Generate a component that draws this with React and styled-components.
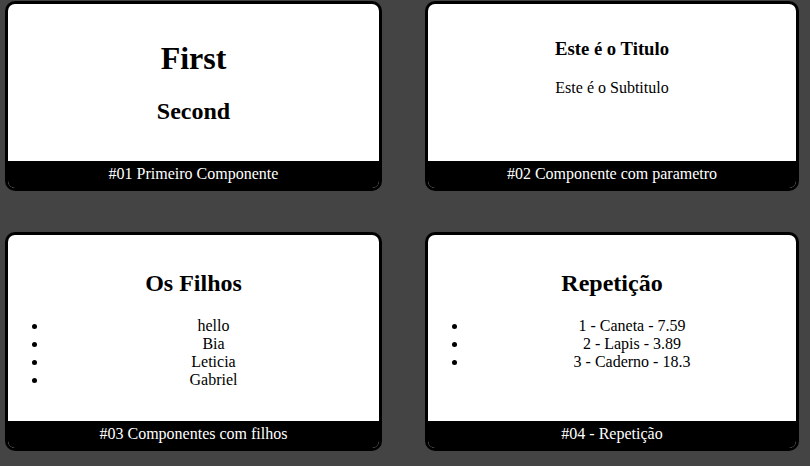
import React from "react"
import styled, { createGlobalStyle } from "styled-components"

const GlobalStyle = createGlobalStyle`
    html, body{
        margin:0;
        padding:0;
        background-color:#444;
        font-family:"Liberation Serif", "Times New Roman", serif;
    }
`

const Page = styled.div`
    display:grid;
    grid-template-columns:377px 374px;
    column-gap:43px;
    row-gap:41px;
    padding:1px 10px 15px 5px;
    min-height:466px;
    box-sizing:border-box;
`

const Card = styled.article`
    display:flex;
    flex-direction:column;
    background-color:white;
    border:3px solid black;
    border-radius:10px;
    overflow:hidden;
`

const CardContent = styled.div`
    flex-grow:1;
    padding:15px 0 14px;
    text-align:center;
    color:#000;

    h1, h2, h3, p, ul{
        margin-left:0;
        margin-right:0;
    }
    h1{
        font-size:32px;
        margin-top:21px;
        margin-bottom:21px;
    }
    h2{
        font-size:24px;
        margin-top:20px;
        margin-bottom:20px;
    }
    h3{
        font-size:18.72px;
        margin-top:19px;
        margin-bottom:19px;
    }
    p{
        font-size:16px;
        margin:16px 0;
    }
    ul{
        padding-left:40px;
        margin:16px 0;
        font-size:16px;
    }
`

const Footer = styled.footer`
    background-color:black;
    color:white;
    text-align:center;
    font-size:16px;
    padding:4px 0 5px;
`

function Box({ title, children }) {
    return (
        <Card>
            <CardContent>{children}</CardContent>
            <Footer>{title}</Footer>
        </Card>
    )
}

const filhos = ["hello", "Bia", "Leticia", "Gabriel"]
const produtos = [
    { id: 1, nome: "Caneta", preco: 7.59 },
    { id: 2, nome: "Lapis", preco: 3.89 },
    { id: 3, nome: "Caderno", preco: 18.3 },
]

export default function App() {
    return (
        <>
            <GlobalStyle />
            <Page>
                <Box title="#01 Primeiro Componente">
                    <h1>First</h1>
                    <h2>Second</h2>
                </Box>
                <Box title="#02 Componente com parametro">
                    <h3>Este é o Titulo</h3>
                    <p>Este é o Subtitulo</p>
                </Box>
                <Box title="#03 Componentes com filhos">
                    <h2>Os Filhos</h2>
                    <ul>
                        {filhos.map(f => <li key={f}>{f}</li>)}
                    </ul>
                </Box>
                <Box title="#04 - Repetição">
                    <h2>Repetição</h2>
                    <ul>
                        {produtos.map(p => (
                            <li key={p.id}>{p.id} - {p.nome} - {p.preco}</li>
                        ))}
                    </ul>
                </Box>
            </Page>
        </>
    )
}
